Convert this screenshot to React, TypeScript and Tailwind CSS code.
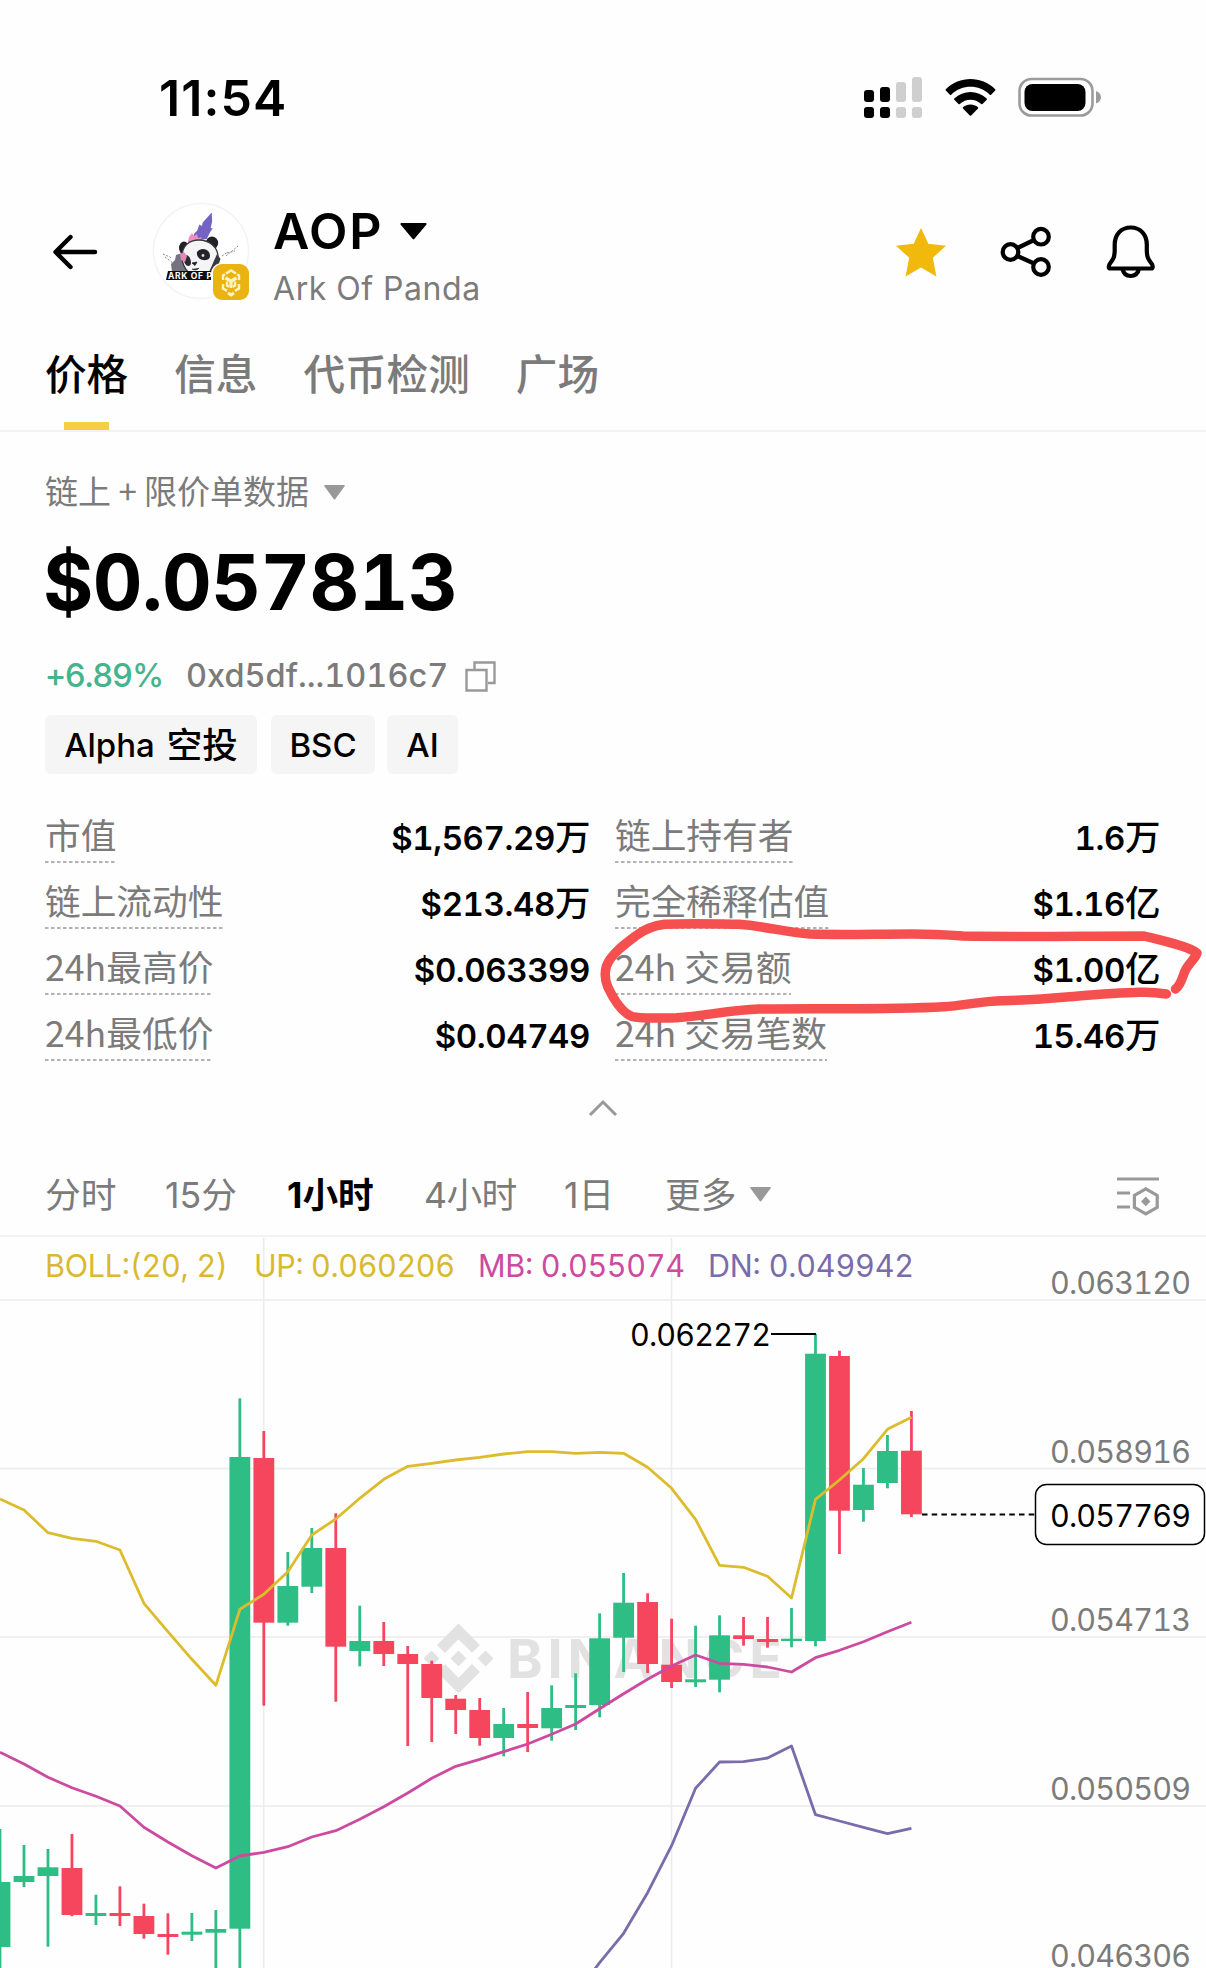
import React from "react";

type Candle = [up: boolean, high: number, top: number, bottom: number, low: number];

const STEP = 23.985;
const cx = (i: number) => i * STEP;

const candles: Candle[] = [
  [true, 1829, 1882, 1947, 1980],
  [true, 1845, 1876, 1882, 1887],
  [true, 1849, 1867.3, 1876, 1946.7],
  [false, 1834, 1868, 1915, 1916.3],
  [true, 1894.7, 1913, 1916, 1925],
  [false, 1886.3, 1913, 1916, 1926],
  [false, 1903.7, 1916, 1934, 1938.7],
  [false, 1913.3, 1934, 1937, 1954.7],
  [true, 1913, 1931.7, 1934.7, 1941],
  [true, 1910, 1929, 1932.7, 1980],
  [true, 1398.3, 1457, 1928.7, 1980],
  [false, 1431, 1458, 1622.7, 1705.7],
  [true, 1552, 1586, 1622.7, 1625.7],
  [true, 1528, 1548, 1586.7, 1593],
  [false, 1513.3, 1548, 1646.7, 1701.7],
  [true, 1605.7, 1641, 1651, 1666.3],
  [false, 1622, 1641, 1654, 1666],
  [false, 1646, 1654, 1664, 1746],
  [false, 1660.7, 1664, 1698, 1742],
  [false, 1695, 1698.7, 1710, 1734],
  [false, 1698, 1710, 1738, 1745.7],
  [true, 1708, 1724, 1738, 1756.3],
  [false, 1692, 1724, 1728, 1752],
  [true, 1685.3, 1708, 1728.3, 1740.7],
  [true, 1673.3, 1705, 1708, 1730],
  [true, 1613.3, 1638.3, 1705, 1717.3],
  [true, 1573, 1602.7, 1637.7, 1672],
  [false, 1593.3, 1602, 1664, 1673],
  [false, 1618.7, 1664.7, 1682, 1688],
  [true, 1625.7, 1679.3, 1682.3, 1687],
  [true, 1615.3, 1635.3, 1679.7, 1692.3],
  [false, 1617, 1635.3, 1639, 1645.7],
  [false, 1617, 1639, 1642, 1647.7],
  [true, 1608, 1638.7, 1641, 1647.3],
  [true, 1334, 1353.7, 1641, 1646.3],
  [false, 1350.7, 1356, 1510.7, 1554],
  [true, 1468, 1484.7, 1510, 1521.7],
  [true, 1435, 1451, 1483, 1488.3],
  [false, 1411, 1450.7, 1514.3, 1517],
];

const upper = [
  1499, 1510, 1532.7, 1538.3, 1541.3, 1550, 1603.3, 1631.7, 1659.3, 1685.3, 1609.3, 1594.3, 1571.7,
  1535, 1519, 1498.3, 1479.3, 1466.3, 1463.3, 1460, 1457.3, 1454, 1451.7, 1451.7, 1453.3, 1452.3,
  1453.3, 1467.3, 1488.3, 1519.3, 1565.3, 1567.3, 1576.3, 1598, 1499.3, 1480, 1458.7, 1429.3, 1417.3,
];

const middle = [
  1752.3, 1764, 1777.3, 1787.7, 1796.3, 1806, 1827.3, 1842, 1855.7, 1868, 1856, 1852.3, 1846.7, 1837,
  1830.7, 1819.3, 1806.7, 1793, 1778.3, 1766.3, 1759.3, 1751.7, 1744, 1734.3, 1724, 1708.7, 1693.7,
  1679.3, 1666, 1655, 1663.3, 1664.3, 1667, 1672, 1657.7, 1650.3, 1641.7, 1631.7, 1622.3,
];

const lower = [
  1994, 1962.7, 1933.3, 1892.7, 1845.7, 1788.3, 1762, 1761.7, 1758, 1746, 1814.7, 1821, 1827.3,
  1833.7, 1828.3,
];

const points = (ys: number[], from = 0) => ys.map((y, i) => `${cx(i + from)},${y}`).join(" ");

const axis: [string, number][] = [
  ["0.063120", 1294],
  ["0.058916", 1463],
  ["0.054713", 1631],
  ["0.050509", 1800],
  ["0.046306", 1967],
];

const FONT = "font-['Inter','Noto_Sans_CJK_SC',sans-serif] tabular-nums";

function StatusBar() {
  return (
    <div className="flex h-[195px] items-start justify-between pl-[159px] pr-[105px]">
      <span className="mt-[67px] text-[50px] leading-[62px] font-semibold tracking-[1.1px] proportional-nums">11:54</span>
      <div className="mt-[77px] flex">
        <svg width="59" height="42" viewBox="0 0 59 42" className="mr-[22px]">
          <g fill="#000">
            <rect x="0" y="13" width="10" height="12" rx="3" />
            <rect x="16" y="10" width="10" height="15" rx="3" />
            <rect x="0" y="30" width="10" height="11" rx="3" />
            <rect x="16" y="30" width="10" height="11" rx="3" />
          </g>
          <g fill="#cfcfcf">
            <rect x="32" y="5" width="10" height="20" rx="3" />
            <rect x="48" y="0" width="10" height="25" rx="3" />
            <rect x="32" y="30" width="10" height="11" rx="3" />
            <rect x="48" y="30" width="10" height="11" rx="3" />
          </g>
        </svg>
        <svg width="51" height="42" viewBox="0 0 51 42" className="mr-[22px]">
          <path d="M0.8 12.2C14.5-1.5 36.5-1.5 50.2 12.2a1 1 0 0 1 0 1.3l-4.1 4.2a1 1 0 0 1-1.3 0C34 7.2 17 7.2 6.2 17.7a1 1 0 0 1-1.3 0L0.8 13.5a1 1 0 0 1 0-1.3z" />
          <path d="M9.3 21.5c9-8.7 23.4-8.7 32.4 0a1 1 0 0 1 0 1.3l-4.2 4.2a1 1 0 0 1-1.3 0c-6-5.7-15.4-5.7-21.4 0a1 1 0 0 1-1.3 0l-4.2-4.2a1 1 0 0 1 0-1.3z" />
          <path d="M18 30.2c4.300-3.700 10.700-3.700 15 0a1 1 0 0 1 0 1.400l-6.800 6.900a1 1 0 0 1-1.400 0L18 31.600a1 1 0 0 1 0-1.400z" />
        </svg>
        <svg width="83" height="42" viewBox="0 0 83 42">
          <rect x="1.500" y="2" width="73" height="36.500" rx="12" fill="none" stroke="#9b9b9b" strokeWidth="2.600" />
          <rect x="6.500" y="7" width="61" height="27" rx="8" />
          <path d="M78 14c3 1 5 3.500 5 6.200s-2 5.200-5 6.200z" fill="#9b9b9b" />
        </svg>
      </div>
    </div>
  );
}

function TokenLogo() {
  return (
    <svg width="100" height="100" viewBox="152 202 100 100" className="mr-[21px]">
      <circle cx="201" cy="251" r="47.500" fill="#fff" stroke="#f3f3f3" strokeWidth="1.500" />
      <path d="M211.700 212.500l-9 10-.7 3.500-2.700-1.500-2 6-3 3-1.600 4.500 6 2 8-1 3.500-7 2.500-3.500-2-.5 1.500-7z" fill="#7463c4" />
      <path d="M189 237l3-4 2 3 3-2 1 4 4-1-3 5-8 3-3-3z" fill="#ec8fc4" />
      <path d="M163 254l9 4m-7-1 8 6m-1 2 5 2M226 256l12-10m-11 7 8-2m-13 5 6-4" stroke="#8b8b8b" strokeWidth="1" strokeDasharray="2 1.500" fill="none" />
      <path d="M171 264l4-4 1-5 6-2 5 19h-15z" fill="#77727f" />
      <ellipse cx="184" cy="248" rx="5" ry="6.500" fill="#232128" />
      <ellipse cx="212" cy="243" rx="6.200" ry="6.500" fill="#232128" />
      <path d="M182 257c0-11 7-17 17-17s19 7 19 17c0 6-5 10-7 16h-22c-4-4-7-10-7-16z" fill="#f5f5f5" stroke="#3a3a3a" strokeWidth="1.300" />
      <path d="M197 252c3-4 9-4 12 0 2 4 1 8-3 8-5 1-10-3-9-8z" fill="#26242b" />
      <path d="M186 255c3 0 5 4 5 8 0 3-3 4-5 2-3-3-3-9 0-10z" fill="#2c2a31" />
      <path d="M180 254l4-2 3 4-2 6-4-2z" fill="#e389b7" />
      <circle cx="203" cy="255.500" r="1.400" fill="#ddd" />
      <path d="M192 263l5-1-2 3.500zm0 6c3 1.500 5 1 7-1" fill="#222" stroke="#222" strokeWidth=".8" />
      <path d="M217 254l3.500 5-4.500 13h-7z" fill="#3b3940" />
      <path d="M168 271h44v9h-46z" fill="#0d0d0d" />
      <text x="168" y="278.700" fontSize="8.500" fontWeight="700" fill="#fff" textLength="44" className="font-['Inter',sans-serif]">ARK OF P</text>
      <rect x="211" y="263" width="40" height="40" rx="11" fill="#fff" />
      <rect x="213" y="264" width="36" height="36" rx="9" fill="#e9b411" />
      <g fill="none" stroke="#fff3c4" strokeWidth="2.400">
        <path d="M226 273.500l5-3 5 3M223 280v-4.500l2-1.200M239 280v-4.500l-2-1.200M223 284v4.500l4 2.400M239 284v4.500l-4 2.400" />
        <path d="M225.500 278l5.500 3.200 5.500-3.200M231 281v7M228 293l3 1.800 3-1.800" strokeWidth="3.200" />
        <path d="M227 281.500v4l2 1.200M235 281.500v4l-2 1.200" />
      </g>
    </svg>
  );
}

function Header() {
  return (
    <div className="flex h-[132px] pl-[52px] pr-[49px]">
      <svg width="46" height="36" viewBox="0 0 46 36" className="mt-[39px] mr-[54px]">
        <path d="M18.500 3L3.500 18l15 15M4 18h39" fill="none" stroke="#000" strokeWidth="4.400" strokeLinecap="round" strokeLinejoin="round" />
      </svg>
      <div className="mt-[7px]">
        <TokenLogo />
      </div>
      <div className="flex flex-col">
        <div className="mt-[5px] flex h-[62px] items-center">
          <span className="text-[50px] leading-[62px] font-semibold tracking-[1.7px]">AOP</span>
          <svg width="27" height="17" viewBox="0 0 27 17" className="ml-[17px]">
            <path d="M1.500 0h24a1 1 0 0 1 .8 1.700L14.700 15.600a1.500 1.500 0 0 1-2.400 0L.7 1.700A1 1 0 0 1 1.500 0z" />
          </svg>
        </div>
        <span className="mt-[5px] text-[32px] leading-[44px] tracking-[0.6px] text-[#7b7b7b]">Ark Of Panda</span>
      </div>
      <div className="mt-[28px] ml-auto flex">
        <svg width="52" height="56" viewBox="895 223 52 56" className="mr-[52px]">
          <path d="M921 228l7.300 15.800 17.700 2-13.200 12 3.600 18.700-15.400-9-15.400 9 3.600-18.700-13.200-12 17.700-2z" fill="#f0b90b" />
        </svg>
        <svg width="54" height="56" viewBox="999 223 54 56" className="mr-[50px]">
          <g fill="none" stroke="#000" strokeWidth="4.200">
            <circle cx="1010.500" cy="252" r="7.800" />
            <circle cx="1041" cy="236.700" r="7.800" />
            <circle cx="1041" cy="267" r="7.800" />
            <path d="M1017.500 248l16.500-8M1017.500 256l16.500 7.500" />
          </g>
        </svg>
        <svg width="54" height="58" viewBox="1103 223 54 58">
          <g fill="none" stroke="#000" strokeWidth="4.200" strokeLinejoin="round">
            <path d="M1130.700 227.500c-9.800 0-16 7.300-16 17v6c0 6.500-1.600 9-4.700 13-1.700 2.200-1.800 5 .5 5h40.500c2.300 0 2.200-2.800.5-5-3.100-4-4.700-6.500-4.700-13v-6c0-9.700-6.300-17-16.100-17z" />
            <path d="M1122.500 269c1 4.500 4.300 7 8.200 7s7.200-2.500 8.200-7" />
          </g>
        </svg>
      </div>
    </div>
  );
}

function Tabs() {
  return (
    <div className="flex h-[105px] gap-[46px] border-b-2 border-[#f3f3f3] pl-[45px] text-[41.600px] leading-[60px] font-medium text-[#7b7b7b]">
      <div className="relative pt-[18px] text-black">
        价格
        <div className="absolute bottom-0 left-[19px] h-[8px] w-[45px] bg-[#f2cf46]" />
      </div>
      <div className="pt-[18px]">信息</div>
      <div className="pt-[18px]">代币检测</div>
      <div className="pt-[18px]">广场</div>
    </div>
  );
}

function Caret({ className }: { className: string }) {
  return (
    <svg width="21" height="15" viewBox="0 0 21 15" className={className}>
      <path d="M1 0h19a.7.7 0 0 1 .6 1.200L11.300 14a1 1 0 0 1-1.600 0L.4 1.200A.7.7 0 0 1 1 0z" fill="#999" />
    </svg>
  );
}

function Summary() {
  return (
    <div className="flex h-[370px] flex-col pl-[45px]">
      <div className="mt-[34px] flex h-[48px] items-center text-[33px] leading-[48px] text-[#7b7b7b]">
        <span className="font-['Noto_Sans_CJK_SC',sans-serif]">链上 + 限价单数据</span>
        <Caret className="mt-[4px] ml-[15px]" />
      </div>
      <div className="mt-[21px] -ml-[2px] text-[77px] leading-[94px] font-bold tracking-[-0.6px]">$0.057813</div>
      <div className="mt-[25px] flex h-[44px] items-center text-[32.500px] leading-[44px] font-medium">
        <span className="w-[141px] tracking-[-1.2px] text-[#45b48c]">+6.89%</span>
        <span className="w-[262px] text-[#7b7b7b]">0xd5df...1016c7</span>
        <svg width="31" height="31" viewBox="0 0 31 31" className="ml-[17px]">
          <path d="M1.500 9h20v20.500h-20zM9.500 8V1.500h20v20.500H23" fill="none" stroke="#999" strokeWidth="2.400" />
        </svg>
      </div>
      <div className="mt-[17px] flex text-[33px] leading-[61px] font-medium">
        <span className="mr-[14px] flex h-[59px] w-[212px] justify-center gap-[12px] rounded-md bg-[#f5f5f5]">
          Alpha <span className="text-[35.500px]">空投</span>
        </span>
        <span className="mr-[12px] h-[59px] w-[104px] rounded-md bg-[#f5f5f5] text-center">BSC</span>
        <span className="h-[59px] w-[71px] rounded-md bg-[#f5f5f5] text-center">AI</span>
      </div>
    </div>
  );
}

const stats: [label: string, value: string, unit: string][][] = [
  [
    ["市值", "$1,567.29", "万"],
    ["链上流动性", "$213.48", "万"],
    ["24h最高价", "$0.063399", ""],
    ["24h最低价", "$0.04749", ""],
  ],
  [
    ["链上持有者", "1.6", "万"],
    ["完全稀释估值", "$1.16", "亿"],
    ["24h 交易额", "$1.00", "亿"],
    ["24h 交易笔数", "15.46", "万"],
  ],
];

function Stats() {
  return (
    <div className="relative h-[341px] px-[45px]">
      <div className="grid grid-cols-[545px_545px] gap-x-[25px] pt-[8px]">
        {stats.map((col, c) => (
          <div key={c}>
            {col.map(([label, value, unit]) => (
              <div key={label} className="flex h-[66px] items-start justify-between">
                <span className="relative h-[53px] text-[35.700px] leading-[48px] font-['Noto_Sans_CJK_SC',sans-serif] text-[#7b7b7b]">
                  {label}
                  <svg width="100%" height="2" className="absolute bottom-0 left-0">
                    <line x1="0" y1="1" x2="100%" y2="1" stroke="#999" strokeWidth="1.400" strokeDasharray="3.500 2.500" />
                  </svg>
                </span>
                <span className="text-[33px] leading-[55px] font-semibold tracking-[-0.4px]">
                  {value}
                  <span className="text-[35.500px] font-medium">{unit}</span>
                </span>
              </div>
            ))}
          </div>
        ))}
      </div>
      <svg width="30" height="19" viewBox="0 0 30 19" className="mx-auto mt-[24px]">
        <path d="M2 17L15 4l13 13" fill="none" stroke="#999" strokeWidth="3" />
      </svg>
      <svg width="620" height="116" viewBox="590 910 620 116" className="pointer-events-none absolute top-[108px] left-[590px] overflow-visible">
        <path
          d="M1175.500 989C1181 985 1182 978 1185 971C1188 964 1196 958 1197 953C1190 947 1168 942 1144 936C1085 936 1020 937 963 936C935 934 925 934 912 934C875 934 840 935 810 934C785 932 763 926 739 924.300C715 924 690 923 664.700 924.300C652 926 645 929 637 935C625 944 611 954 606.500 966C604 974 605 980 607.700 986.700C614 1000 623 1013 632 1016.500C640 1019 660 1018 676.400 1017.700C704 1016 730 1010 759 1009C820 1008 885 1010 943.600 1006.700C963 1006 980 1001 1002.600 1000.700C1050 1000 1095 993 1140 992.300C1150 992 1160 993 1166.400 994"
          fill="none"
          stroke="#f5504f"
          strokeWidth="9.500"
          strokeLinecap="round"
          strokeLinejoin="round"
        />
      </svg>
    </div>
  );
}

function Intervals() {
  return (
    <div className="flex h-[94px] items-center border-b-2 border-[#f3f3f3] pl-[45px] pt-[11px] text-[35.700px] leading-[52px] text-[#7b7b7b] proportional-nums">
      <span className="w-[120px]">分时</span>
      <span className="w-[122px]">15分</span>
      <span className="w-[137px] font-bold text-black">1小时</span>
      <span className="w-[140px] tracking-[-0.6px]">4小时</span>
      <span className="w-[101px]">1日</span>
      <span>更多</span>
      <Caret className="ml-[14px]" />
      <svg width="44" height="42" viewBox="1115 1175 44 42" className="mt-[2px] mr-[46px] ml-auto">
        <g fill="none" stroke="#999" strokeWidth="3.200">
          <path d="M1116 1179h42M1116 1193h13M1116 1207h13M1144.800 1188.800l11.400 6.600v12l-11.400 6.600-11.400-6.600v-12z" />
        </g>
        <path d="M1144.800 1196.500l4.700 4.900-4.700 4.900-4.700-4.900z" fill="#999" />
      </svg>
    </div>
  );
}

function Chart() {
  return (
    <svg width="1206" height="731" viewBox="0 1237 1206 731" className={`block ${FONT}`}>
      <g stroke="#ececec" strokeWidth="1.500">
        <path d="M0 1300H1206M0 1468.500H1206M0 1637H1206M0 1806H1206M263.700 1238V1968M671.500 1238V1968" />
      </g>

      <g fill="#e2e2e2">
        <path
          transform="translate(423.500 1623.500) scale(2.917)"
          d="M16.624 13.920l2.717 2.715-7.353 7.353-7.353-7.352 2.717-2.716 4.636 4.659 4.636-4.659zm4.637-4.637L24 12l-2.715 2.716L18.568 12l2.692-2.716zm-9.272.001l2.716 2.691-2.716 2.717L9.272 12l2.716-2.715zm-9.272-.001L5.409 12l-2.691 2.692L0 12l2.716-2.716zM11.988.011l7.353 7.329-2.717 2.715-4.636-4.636-4.636 4.660-2.717-2.715z"
        />
        <text x="507" y="1678" fontSize="54" fontWeight="700" textLength="275">BINANCE</text>
      </g>

      {candles.map(([up, high, top, bottom, low], i) => (
        <g key={i} fill={up ? "#2ebd85" : "#f6465d"}>
          <rect x={cx(i) - 1.4} y={high} width="2.800" height={low - high} />
          <rect x={cx(i) - 10.4} y={top} width="20.800" height={bottom - top} />
        </g>
      ))}

      <g fill="none" strokeWidth="2.800" strokeLinejoin="round">
        <polyline points={points(upper)} stroke="#dcbc2c" />
        <polyline points={points(middle)} stroke="#cc4aa0" />
        <polyline points={points(lower, 24)} stroke="#7a6bab" />
      </g>

      <g fontSize="30.500">
        <text x="45" y="1276.500" fill="#d9b92f" textLength="183">BOLL:(20, 2)</text>
        <text x="254" y="1276.500" fill="#d9b92f" textLength="201">UP: 0.060206</text>
        <text x="478" y="1276.500" fill="#cc4aa0" textLength="207">MB: 0.055074</text>
        <text x="708" y="1276.500" fill="#7a6bab" textLength="206">DN: 0.049942</text>
        {axis.map(([label, y]) => (
          <text key={label} x="1050" y={y} fill="#7b7b7b" textLength="141">{label}</text>
        ))}
        <text x="630" y="1346" textLength="141">0.062272</text>
      </g>
      <path d="M771 1334H816" stroke="#000" strokeWidth="1.800" />

      <path d="M922 1514.500H1035" stroke="#000" strokeWidth="1.800" strokeDasharray="5.500 4.200" />
      <rect x="1035.500" y="1484.500" width="169" height="60" rx="11" fill="#fff" stroke="#000" strokeWidth="1.500" />
      <text x="1050" y="1527" fontSize="30.500" textLength="141">0.057769</text>
    </svg>
  );
}

export default function App() {
  return (
    <div className={`h-[1968px] w-[1206px] overflow-hidden bg-[#fefefe] text-black ${FONT}`}>
      <StatusBar />
      <Header />
      <Tabs />
      <Summary />
      <Stats />
      <Intervals />
      <Chart />
    </div>
  );
}
